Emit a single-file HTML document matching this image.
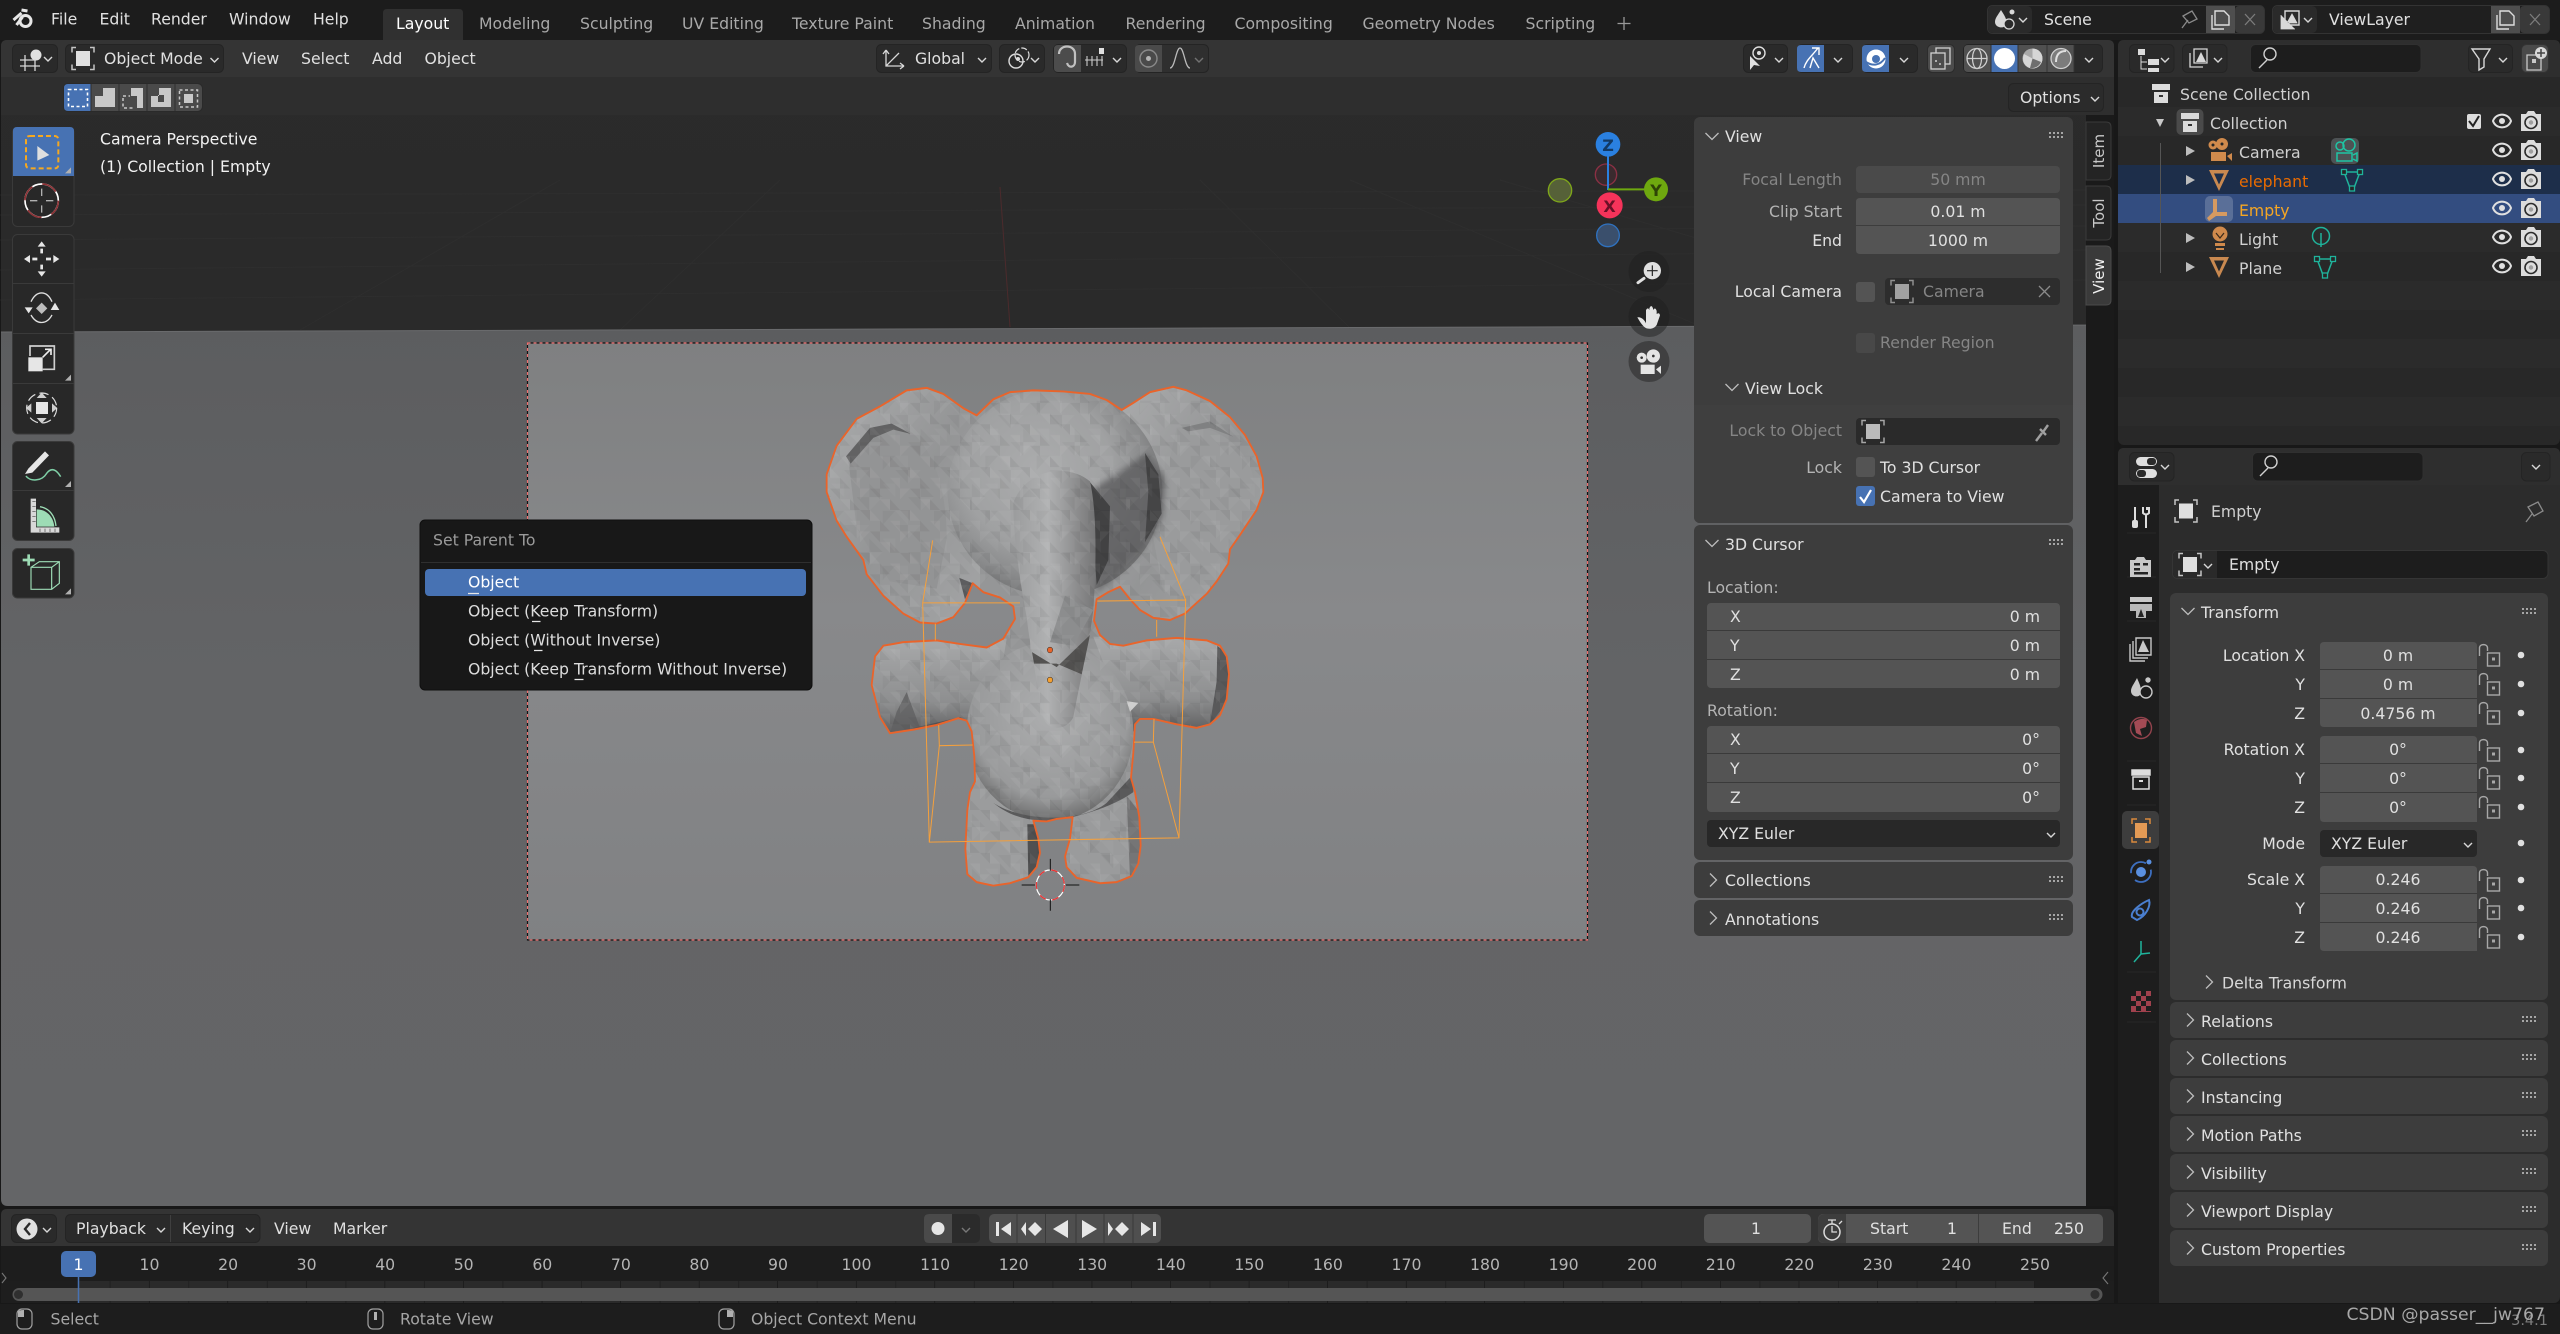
<!DOCTYPE html>
<html><head><meta charset="utf-8"><title>Blender</title>
<style>
html,body{margin:0;padding:0;background:#181818;width:2560px;height:1334px;overflow:hidden}
svg{display:block;position:absolute;left:0;top:0}
text{font-family:"DejaVu Sans","Liberation Sans",sans-serif;font-size:15.7px;fill:#e0e0e0}
.m{text-anchor:middle}.e{text-anchor:end}
.tab{fill:#a8a8a8}.dim{fill:#858585}.lab{fill:#b4b4b4}.tn{fill:#b4b4b4}.st{fill:#a6a6a6}
.w{fill:#2a2a2a;stroke:#242424}.f{fill:#545454}.l{fill:none;stroke:#dcdcdc;stroke-width:1.5}
.ls{fill:none;stroke:#b8b8b8;stroke-width:1.3}.p{fill:#3d3d3d}.i{fill:#dcdcdc}
</style></head><body>
<svg width="2560" height="1334" viewBox="0 0 2560 1334" xmlns="http://www.w3.org/2000/svg">
<defs>
<g id="dn"><path d="M-4-2L0 2L4-2" fill="none" stroke="#d8d8d8" stroke-width="1.4"/></g>
<g id="pd"><path d="M-6.500-3L0 3.500L6.500-3" fill="none" stroke="#bdbdbd" stroke-width="1.3"/></g>
<g id="pr"><path d="M-3-6.500L3.500 0L-3 6.500" fill="none" stroke="#bdbdbd" stroke-width="1.3"/></g>
<g id="gr"><path d="M0 0H15M0 4H15" stroke="#a6a6a6" stroke-width="2" stroke-dasharray="2 2" fill="none"/></g>
<g id="ob"><path d="M-7-11H-11V-6M7-11H11V-6M-7 11H-11V6M7 11H11V6" fill="none" stroke="#c4c4c4" stroke-width="1.5"/><rect x="-7" y="-7.500" width="14" height="15" fill="#e0e0e0"/></g>
<g id="ey"><path d="M-9 0C-6-8.500 6-8.500 9 0C6 8.500-6 8.500-9 0Z" fill="none" stroke="#e0e0e0" stroke-width="2"/><circle r="3" fill="#e0e0e0"/></g>
<g id="rc"><path d="M-10-7H-5L-3-10H3L5-7H10V10H-10Z" fill="#dcdcdc"/><circle cy="1.500" r="6" fill="none" stroke="#2b2b2b" stroke-width="1.600"/><circle cy="1.500" r="2.200" fill="#2b2b2b" opacity=".35"/></g>
<g id="me"><path fill-rule="evenodd" d="M-10-10H10L0 11ZM-5-6.500L0 4.500L5-6.500Z" fill="#c98950"/></g>
<g id="md"><path d="M-8-8H8L2 8H-2Z" fill="none" stroke="#1fb39b" stroke-width="1.500"/><rect x="-10.500" y="-10.500" width="5" height="5" fill="#262626" stroke="#1fb39b" stroke-width="1.300"/><rect x="5.500" y="-10.500" width="5" height="5" fill="#262626" stroke="#1fb39b" stroke-width="1.300"/><rect x="-2.500" y="6" width="5" height="5" fill="#262626" stroke="#1fb39b" stroke-width="1.300"/></g>
<g id="lk"><path d="M-11 1V-7C-11-11.500-3-11.500-3-7V-4" fill="none" stroke="#a8a8a8" stroke-width="1.400"/><rect x="-3" y="-2" width="12" height="13" fill="none" stroke="#a8a8a8" stroke-width="1.400"/><rect x="1.500" y="2.500" width="3" height="3" fill="#a8a8a8"/></g>
<g id="mg"><path d="M-8-4C-8-14 8-14 8-4V4C8 9 2 11 0 5" fill="none" stroke="#c0c0c0" stroke-width="2.200"/></g>
<path id="corner" d="M0 6L6 0V6Z" fill="#b0b0b0"/>
<linearGradient id="vtop" x1="0" y1="0" x2="0" y2="1"><stop offset="0" stop-color="#2b2b2b"/><stop offset="1" stop-color="#262626"/></linearGradient>
<linearGradient id="ground" x1="0" y1="0" x2="0" y2="1"><stop offset="0" stop-color="#5c5d5f"/><stop offset=".4" stop-color="#636466"/><stop offset="1" stop-color="#646567"/></linearGradient>
<linearGradient id="frame" x1="0" y1="0" x2="0" y2="1"><stop offset="0" stop-color="#7f8081"/><stop offset=".45" stop-color="#88898b"/><stop offset="1" stop-color="#808183"/></linearGradient>
<radialGradient id="hd" cx=".42" cy=".4" r=".7"><stop offset="0" stop-color="#abacad"/><stop offset=".5" stop-color="#a0a1a2"/><stop offset=".72" stop-color="#8a8b8c"/><stop offset="1" stop-color="#626263"/></radialGradient>
<linearGradient id="ear1" x1="0" y1="0" x2="1" y2="1"><stop offset="0" stop-color="#abacad"/><stop offset=".5" stop-color="#949596"/><stop offset="1" stop-color="#a4a5a6"/></linearGradient>
<linearGradient id="trk" x1="0" y1="0" x2="1" y2="0"><stop offset="0" stop-color="#9b9c9d"/><stop offset=".42" stop-color="#b0b1b2"/><stop offset="1" stop-color="#767677"/></linearGradient>
<linearGradient id="arm" x1="0" y1="0" x2="0" y2="1"><stop offset="0" stop-color="#a8a9aa"/><stop offset=".65" stop-color="#8e8f90"/><stop offset="1" stop-color="#5e5e5f"/></linearGradient>
<radialGradient id="bod" cx=".5" cy=".4" r=".65"><stop offset="0" stop-color="#adaeaf"/><stop offset=".72" stop-color="#999a9b"/><stop offset="1" stop-color="#5f5f5f"/></radialGradient>
<filter id="bl" x="-20%" y="-20%" width="140%" height="140%"><feGaussianBlur stdDeviation="9"/></filter>
<pattern id="fc" width="120" height="120" patternUnits="userSpaceOnUse">
<path d="M0 0H30L0 30ZM60 30H90V60ZM30 60L60 90H30ZM90 90H120V120Z" fill="#fff" opacity=".05"/>
<path d="M30 0H60V30ZM90 30L120 60H90ZM0 60H30V90ZM60 90L90 120H60Z" fill="#000" opacity=".05"/>
</pattern>
<pattern id="fc2" width="154" height="154" patternUnits="userSpaceOnUse">
<path d="M0 38H38V76ZM76 0H114L76 38ZM38 114H76V154ZM114 76H154L114 114Z" fill="#fff" opacity=".03"/>
<path d="M38 0H76V38ZM114 38L154 76H114ZM0 114H38L0 154ZM76 76H114V114Z" fill="#000" opacity=".03"/>
</pattern>
<pattern id="tk" width="78.56" height="30" x="70.94" patternUnits="userSpaceOnUse"><rect x="78" width="1.200" height="30" fill="#111"/><rect x="38.7" width="1" height="30" fill="#202020"/></pattern>
<clipPath id="cl"><path id="olp" d="M590 155L640 110L690 90L760 85L850 88L930 95L980 112L1025 140L1060 120L1110 90L1180 75L1220 85L1290 115L1350 160L1395 210L1430 270L1448 330L1450 370L1430 420L1380 490L1350 530L1345 570L1310 620L1280 655L1250 680L1215 710L1170 728L1120 722L1080 700L1050 670L1020 635L985 650L950 670L942 730L960 770L990 795L1030 800L1100 785L1190 778L1280 785L1320 800L1340 830L1347 880L1340 950L1320 995L1290 1020L1250 1030L1190 1020L1120 1005L1080 1005L1065 1020L1060 1100L1053 1170L1065 1210L1078 1280L1082 1360L1075 1410L1055 1445L1010 1462L960 1465L890 1450L860 1420L855 1390L870 1340L878 1280L830 1285L800 1292L760 1290L775 1340L780 1380L770 1420L745 1448L690 1465L640 1472L590 1462L562 1440L556 1370L562 1260L570 1210L585 1180L583 1110L575 1040L560 1010L535 1003L470 1022L400 1035L330 1045L300 1000L275 910L285 830L310 800L370 790L470 785L540 795L620 805L670 780L705 725L700 690L660 665L610 650L578 625L555 680L520 720L470 738L420 735L370 710L310 660L260 600L250 560L200 495L170 450L140 370L140 320L170 240L230 165L300 130L380 85L440 78L490 95L550 135Z"/></clipPath>
</defs>

<!-- base -->
<rect width="2560" height="1334" fill="#181818"/>
<rect width="2560" height="40" fill="#1c1c1c"/>
<rect y="1304" width="2560" height="30" fill="#1d1d1d"/>

<!-- Top bar -->
<g transform="translate(24.500 19)"><circle cx="1" cy="2" r="5.500" fill="none" stroke="#e6e6e6" stroke-width="3"/><path d="M-11 1L-3-6M-8 6L-2-2M-3-9L3-8" stroke="#e6e6e6" stroke-width="3" fill="none"/></g>
<text x="51" y="24.500">File</text><text x="99.500" y="24.500">Edit</text><text x="151" y="24.500">Render</text><text x="229" y="24.500">Window</text><text x="313" y="24.500">Help</text>
<path d="M383 40V13Q383 9 387 9H459Q463 9 463 13V40Z" fill="#303030"/>
<text x="396" y="29" style="fill:#fff">Layout</text>
<g class="tab"><text class="tab" x="479" y="29">Modeling</text><text class="tab" x="580" y="29">Sculpting</text><text class="tab" x="682" y="29">UV Editing</text><text class="tab" x="792" y="29">Texture Paint</text><text class="tab" x="922" y="29">Shading</text><text class="tab" x="1015" y="29">Animation</text><text class="tab" x="1125.500" y="29">Rendering</text><text class="tab" x="1234.500" y="29">Compositing</text><text class="tab" x="1362.500" y="29">Geometry Nodes</text><text class="tab" x="1525.500" y="29">Scripting</text></g>
<path d="M1624 17V30M1617.500 23.500H1630.500" stroke="#999" stroke-width="1.300"/>

<!-- scene selector -->
<rect x="1987.500" y="5.500" width="277" height="28" rx="5" fill="#1f1f1f" stroke="#333"/>
<rect x="1988" y="6" width="44" height="27" rx="5" fill="#2a2a2a"/>
<path d="M2001 10C2006 18 2008 21 2005 26C2002 29 1995 27 1995 22C1995 18 1998 15 2001 10Z" fill="#d8d8d8"/><circle cx="2009" cy="24" r="5" fill="#2a2a2a" stroke="#d8d8d8" stroke-width="1.300"/><circle cx="2012" cy="12" r="2.500" fill="#d8d8d8"/>
<use href="#dn" x="2023" y="20"/>
<text x="2044" y="25">Scene</text>
<path d="M2182 28L2188 20M2183 16L2192 11L2197 19L2189 23Z" fill="none" stroke="#8a8a8a" stroke-width="1.300"/>
<rect x="2206" y="6" width="29" height="27" fill="#4e4e4e"/>
<path d="M2215 11H2224L2229 16V25H2215ZM2212 15V29H2224" fill="none" stroke="#ddd" stroke-width="1.400"/>
<rect x="2235" y="6" width="29" height="27" rx="4" fill="#393939"/><path d="M2245 14L2255 25M2255 14L2245 25" stroke="#7c7c7c" stroke-width="1.300"/>
<rect x="2272.500" y="5.500" width="277" height="28" rx="5" fill="#1f1f1f" stroke="#333"/>
<rect x="2273" y="6" width="44" height="27" rx="5" fill="#2a2a2a"/>
<path d="M2285 11H2299V25H2285Z" fill="none" stroke="#d8d8d8" stroke-width="1.400"/><path d="M2281 15V29H2295M2287 23L2292 14L2297 23Z" fill="#d8d8d8" stroke="#d8d8d8" stroke-width=".8"/>
<use href="#dn" x="2308" y="20"/>
<text x="2329" y="25">ViewLayer</text>
<rect x="2491" y="6" width="29" height="27" fill="#4e4e4e"/>
<path d="M2500 11H2509L2514 16V25H2500ZM2497 15V29H2509" fill="none" stroke="#ddd" stroke-width="1.400"/>
<rect x="2520" y="6" width="29" height="27" rx="4" fill="#393939"/><path d="M2530 14L2540 25M2540 14L2530 25" stroke="#7c7c7c" stroke-width="1.300"/>

<!-- 3D viewport -->
<rect x="1" y="40" width="2113" height="1166" rx="6" fill="url(#vtop)"/>
<path d="M1 332L2114 325V1206H8Q1 1206 1 1199Z" fill="url(#ground)"/>
<g stroke="#323232" stroke-width="1" fill="none" opacity=".45">
<path d="M0 300L2086 280M0 270L2086 250M0 240L2086 226M0 215L2086 205M0 195L2086 190M300 330L560 180M620 330L780 180M1350 328L1200 180M1700 326L1350 180M1990 325L1500 180"/>
</g>
<path d="M1000 187L1010 327" stroke="#4c2a2c" stroke-width="1"/>
<path d="M1 332L2114 325" stroke="#6a6b6d" stroke-width="1"/>
<rect x="527.500" y="343" width="1060" height="597" fill="url(#frame)" stroke="#111" stroke-width="1.200"/>
<rect x="527.500" y="343" width="1060" height="597" fill="none" stroke="#ef6f6f" stroke-width="1.200" stroke-dasharray="3 3"/>

<!-- Elephant: zoom coordinates x/3, y/2.8 -->
<g transform="translate(780 360) scale(.33333 .35714)">
<g clip-path="url(#cl)">
<rect width="1560" height="1560" fill="#959697"/>
<path d="M140 70H600V760H140Z" fill="url(#ear1)"/>
<path d="M1000 70H1460V740H1000Z" fill="url(#ear1)"/>
<path d="M205 280C240 200 300 170 390 200C440 230 500 330 500 500L470 640L330 620L230 470Z" fill="#939495"/>
<path d="M1190 190C1300 170 1400 240 1420 330C1400 430 1330 560 1240 640L1150 650L1120 500Z" fill="#9a9b9c"/>
<path d="M198 270L270 190L335 178L392 207L340 195L280 218L212 290Z" fill="#626263"/>
<path d="M1205 190L1290 172L1360 215L1290 190L1225 200Z" fill="#808182"/>
<path d="M260 780H680L640 1010L330 1050L270 1000Z" fill="url(#arm)"/>
<path d="M940 775H1350V1040H1050Z" fill="url(#arm)"/>
<path d="M1312 800L1350 830L1340 960L1290 1020L1310 900Z" fill="#59595a"/>
<path d="M380 930L420 1030L330 1045L350 985Z" fill="#606061" opacity=".8"/>
<path d="M380 1035L540 1000L580 1020L470 1025Z" fill="#555556"/>
<path d="M550 1200H790V1480H550Z" fill="#9b9c9d"/>
<path d="M742 1300L790 1300L780 1420L745 1450Z" fill="#505051"/>
<path d="M860 1240H1090V1480H860Z" fill="#9a9b9c"/>
<path d="M1040 1220L1090 1280L1080 1420L1050 1450Z" fill="#757576"/>
<ellipse cx="810" cy="1040" rx="250" ry="250" fill="url(#bod)"/>
<path d="M640 1240C720 1290 900 1300 980 1240L1060 1160L1060 1210C1000 1250 880 1290 780 1290C720 1285 680 1270 640 1240Z" fill="#5a5a5b"/>
<path d="M538 610L578 625L555 670Z" fill="#58585a"/>
<ellipse cx="825" cy="370" rx="322" ry="292" fill="url(#hd)"/>
<g filter="url(#bl)">
<path d="M940 360L1040 300L1100 260L1155 330L1150 440L1090 530L1000 610L950 650Z" fill="#5f5f60" opacity=".85"/>
</g>
<path d="M1095 260L1135 320L1145 430L1095 510L1105 370Z" fill="#454546"/>
<path d="M928 340L990 410L985 560L950 630Z" fill="#424243"/>
<path d="M700 400C740 300 870 290 930 340C950 420 950 560 940 700C930 780 900 900 880 1000C860 1040 800 1040 790 1000C770 900 750 800 740 720C720 620 700 500 700 400Z" fill="url(#trk)"/>
<path d="M756 818L830 860L930 770L905 880L830 850L762 850Z" fill="#545352"/>
<path d="M855 660L940 700L880 800L810 790Z" fill="#8c8d8e"/>
<path d="M1040 955L1075 960L1050 985Z" fill="#cfcfcf"/>
<rect width="1560" height="1560" fill="url(#fc)"/>
<rect width="1560" height="1560" fill="url(#fc2)"/>
</g>
<use href="#olp" fill="none" stroke="#e9642b" stroke-width="5.500" stroke-linejoin="round"/>
<g fill="none" stroke="#f5a03c" stroke-width="3">
<path d="M428 680L448 1350L1197 1338L1217 672L952 675M428 680L720 680"/>
<path d="M428 680L458 505M1217 672L1140 495M448 1350L478 1080M1197 1338L1120 1070M478 1080L578 1078M1062 1070L1120 1070M466 738L466 785M1130 728L1130 775M476 1022L478 1080M1122 1005L1120 1070"/>
</g>
<circle cx="810" cy="812" r="8" fill="#e9642b" stroke="#3a2a1a" stroke-width="1.500"/>
<circle cx="810" cy="896" r="8" fill="#f5a030" stroke="#3a2a1a" stroke-width="1.500"/>
<circle cx="811" cy="1470" r="42" fill="none" stroke="#fff" stroke-width="3.500"/>
<circle cx="811" cy="1470" r="42" fill="none" stroke="#e33" stroke-width="3.500" stroke-dasharray="20 20"/>
<path d="M725 1470H765M858 1470H898M811 1397V1430M811 1510V1542" stroke="#111" stroke-width="3"/>
</g>

<!-- Header viewport -->
<path d="M1 77V46Q1 40 7 40H2108Q2114 40 2114 46V77Z" fill="#343434"/>
<rect x="1" y="77" width="2113" height="38" fill="#2e2e2e"/>
<rect class="w" x="12.500" y="44.500" width="45" height="28" rx="5"/>
<circle cx="36" cy="55" r="5.500" fill="#e0e0e0"/><path d="M20 60H36M20 66H40M25 55V71M35 60V71" stroke="#d8d8d8" stroke-width="1.300" fill="none"/>
<use href="#dn" x="48" y="59"/>
<rect class="w" x="65.500" y="44.500" width="158" height="28" rx="5"/>
<use href="#ob" x="83" y="58.500"/>
<text x="104" y="64">Object Mode</text><use href="#dn" x="214.500" y="60"/>
<text x="242" y="64">View</text><text x="301" y="64">Select</text><text x="372" y="64">Add</text><text x="424.500" y="64">Object</text>
<!-- select modes -->
<rect x="63.500" y="83.500" width="139" height="28" rx="5" fill="#4a4a4a" stroke="#2a2a2a"/>
<path d="M68 84H91V111H68Q64 111 64 107V88Q64 84 68 84Z" fill="#4772b3"/>
<path d="M91 84V111M119 84V111M147 84V111M175 84V111" stroke="#2f2f2f"/>
<rect x="68.500" y="89.500" width="19" height="17" fill="none" stroke="#fff" stroke-width="1.600" stroke-dasharray="3 2.500"/>
<path d="M103 88H115V107H95V96H103Z" fill="#c8c8c8"/>
<path d="M131 88H143V108H137V96H131Z" fill="#c8c8c8"/><path d="M123 96H130M123 98V108H134" stroke="#c8c8c8" stroke-width="1.500" stroke-dasharray="3 2.500" fill="none"/>
<path fill-rule="evenodd" d="M159 88H171V107H151V96H159ZM158 95V102H164V95Z" fill="#c8c8c8"/>
<rect x="179.500" y="90" width="18" height="17" fill="none" stroke="#c8c8c8" stroke-width="1.500" stroke-dasharray="3 2.500"/><rect x="184" y="94" width="9" height="9" fill="#c8c8c8"/>

<!-- Center header widgets -->
<rect class="w" x="876.500" y="44.500" width="115" height="28" rx="5"/>
<path d="M886 50V66H904M886 50L883 54M886 50L889 54M904 66L900 63M904 66L900 69M886 66L899 53" fill="none" stroke="#d8d8d8" stroke-width="1.300"/>
<text x="915" y="64">Global</text><use href="#dn" x="982" y="60"/>
<rect class="w" x="999.500" y="44.500" width="45" height="28" rx="5"/>
<circle cx="1016" cy="61" r="7" fill="none" stroke="#ddd" stroke-width="1.400"/><circle cx="1022" cy="55" r="7" fill="none" stroke="#ddd" stroke-width="1.200" stroke-dasharray="6 2"/><circle cx="1018" cy="59" r="2" fill="#ddd"/><use href="#dn" x="1035" y="60"/>
<rect class="w" x="1053.500" y="44.500" width="73" height="28" rx="5"/>
<path d="M1058 45H1081V72H1058Q1054 72 1054 68V49Q1054 45 1058 45Z" fill="#4c4c4c"/>
<use href="#mg" x="1067" y="58"/>
<path d="M1085 60H1103M1087 56V66M1092 56V66M1097 56V66M1102 56V66" stroke="#ccc" stroke-width="1.100"/><rect x="1099" y="48" width="5" height="6" fill="#e0e0e0"/><use href="#dn" x="1117" y="60"/>
<rect class="w" x="1135.500" y="44.500" width="73" height="28" rx="5" style="fill:#2f2f2f"/>
<path d="M1139 45H1162V72H1139Q1135 72 1135 68V49Q1135 45 1139 45Z" fill="#4a4a4a"/>
<circle cx="1148.500" cy="58.500" r="8.500" fill="none" stroke="#8a8a8a" stroke-width="1.400"/><circle cx="1148.500" cy="58.500" r="2.500" fill="#b4b4b4"/>
<path d="M1170 68C1175 68 1176 48 1180 48C1184 48 1185 68 1190 68" fill="none" stroke="#bbb" stroke-width="1.300"/><use href="#dn" x="1199" y="60" opacity=".4"/>

<!-- Right header widgets -->
<rect class="w" x="1743.500" y="44.500" width="44" height="28" rx="5"/>
<path d="M1750 56L1750 70L1754 65L1760 66Z" fill="#e0e0e0"/><circle cx="1759" cy="53" r="6" fill="none" stroke="#e0e0e0" stroke-width="1.400"/><circle cx="1759" cy="53" r="2" fill="#e0e0e0"/><use href="#dn" x="1779" y="60"/>
<rect class="w" x="1797.500" y="44.500" width="55" height="28" rx="5"/>
<path d="M1801 45H1824V72H1801Q1797 72 1797 68V49Q1797 45 1801 45Z" fill="#4772b3"/>
<path d="M1804 68C1806 60 1812 56 1818 48M1810 68L1813 58L1819 68M1812 48H1819V55" fill="none" stroke="#fff" stroke-width="1.400"/><use href="#dn" x="1838" y="60"/>
<rect class="w" x="1862.500" y="44.500" width="55" height="28" rx="5"/>
<path d="M1866 45H1889V72H1866Q1862 72 1862 68V49Q1862 45 1866 45Z" fill="#4772b3"/>
<circle cx="1876" cy="59" r="9.500" fill="#fff"/><circle cx="1876" cy="59" r="4" fill="#4772b3"/><path d="M1866 62C1872 66 1880 66 1885 58" stroke="#4772b3" stroke-width="2" fill="none"/><use href="#dn" x="1904" y="60"/>
<rect x="1927.500" y="44.500" width="27" height="28" rx="5" fill="#4c4c4c" stroke="#2c2c2c"/>
<rect x="1936" y="48" width="14" height="16" fill="none" stroke="#d0d0d0" stroke-width="1.300"/><rect x="1931" y="53" width="14" height="16" fill="#4c4c4c" stroke="#d0d0d0" stroke-width="1.300"/><path d="M1935 61H1937M1940 63V65" stroke="#d0d0d0" stroke-width="1.400"/>
<rect x="1963.500" y="44.500" width="139" height="28" rx="5" fill="#2a2a2a" stroke="#242424"/>
<path d="M1968 45H2074V72H1968Q1964 72 1964 68V49Q1964 45 1968 45Z" fill="#505050"/>
<rect x="1991" y="45" width="27" height="27" fill="#4772b3"/>
<path d="M1991 45V72M2018 45V72M2047 45V72M2074 45V72" stroke="#333"/>
<circle cx="1977" cy="58.500" r="10" fill="none" stroke="#cfcfcf" stroke-width="1.300"/><ellipse cx="1977" cy="58.500" rx="4.500" ry="10" fill="none" stroke="#cfcfcf" stroke-width="1.200"/><path d="M1967 58.500H1987" stroke="#cfcfcf" stroke-width="1.200"/>
<circle cx="2004.500" cy="58.500" r="10.500" fill="#fff"/>
<circle cx="2032.500" cy="58.500" r="10" fill="#a8a8a8"/><path d="M2032.500 48.500A10 10 0 0 1 2032.500 68.500A10 10 0 0 1 2024 54L2032.500 58.500Z" fill="#d6d6d6"/><path d="M2032.500 58.500L2041 62A10 10 0 0 1 2030 68Z" fill="#6e6e6e"/>
<circle cx="2061" cy="58.500" r="10" fill="#7c7c7c" stroke="#d0d0d0" stroke-width="1.300"/><path d="M2056 62C2056 54 2060 51 2066 51" stroke="#e0e0e0" stroke-width="2" fill="none"/>
<use href="#dn" x="2089" y="60"/>
<rect class="w" x="2008.500" y="83.500" width="95" height="28" rx="5" style="fill:#2b2b2b"/>
<text x="2020" y="103">Options</text><use href="#dn" x="2095" y="99"/>

<!-- Toolbar -->
<g fill="#282828" stroke="#3a3a3a"><rect x="12.500" y="127.500" width="61.500" height="99" rx="5"/><rect x="12.500" y="234.500" width="61.500" height="199.500" rx="5"/><rect x="12.500" y="441.500" width="61.500" height="99" rx="5"/><rect x="12.500" y="548.500" width="61.500" height="49.500" rx="5"/></g>
<path d="M17 127H70Q74 127 74 131V176H13V131Q13 127 17 127Z" fill="#4772b3"/>
<path d="M13 283.500H74M13 333.500H74M13 383.500H74M13 490.500H74" stroke="#3a3a3a"/>
<g transform="translate(0 120) scale(.33333)">
<path d="M90 48H163Q175 48 175 60V133Q175 145 163 145H90Q78 145 78 133V60Q78 48 90 48Z" fill="none" stroke="#f6a81f" stroke-width="6" stroke-dasharray="15 9"/>
<path d="M112 78L148 105L112 122Z" fill="#dfdfdf"/>
<use href="#corner" transform="translate(195 142) scale(3)"/>
<circle cx="125" cy="242" r="50" fill="none" stroke="#fff" stroke-width="5"/><circle cx="125" cy="242" r="50" fill="none" stroke="#8d2f33" stroke-width="5" stroke-dasharray="48 31"/>
<path d="M125 206V228M125 256V278M90 242H112M138 242H160" stroke="#b0b0b0" stroke-width="4"/>
<g fill="#e6e6e6"><path d="M125 364L137 380H113ZM125 470L137 454H113ZM72 417L90 405V429ZM178 417L160 405V429Z"/><path d="M121 386H129V400H121ZM121 434H129V448H121ZM97 413H112V421H97ZM138 413H153V421H138Z"/></g>
<path d="M93 545C110 510 140 510 156 545M156 585C140 615 110 615 93 585" fill="none" stroke="#e0e0e0" stroke-width="4"/>
<path d="M74 562H98L86 580ZM152 570H178L165 548Z" fill="#e6e6e6"/><path d="M125 548L142 565L125 582L108 565Z" fill="#bdbdbd"/>
<path d="M90 708V678H163V748H128" fill="none" stroke="#cfcfcf" stroke-width="5"/>
<rect x="85" y="712" width="43" height="42" fill="#e6e6e6"/><path d="M128 712L152 688M135 688H153V705" fill="none" stroke="#eee" stroke-width="5"/>
<use href="#corner" transform="translate(195 764) scale(3)"/>
<rect x="108" y="846" width="36" height="36" fill="#e6e6e6"/>
<path d="M125 818L140 834H110ZM125 910L140 894H110ZM78 864L94 850V878ZM172 864L156 850V878Z" fill="#cfcfcf"/>
<circle cx="125" cy="864" r="45" fill="none" stroke="#ddd" stroke-width="3.500" stroke-dasharray="28 13"/>
<path d="M78 1068C90 1085 125 1085 140 1060C155 1040 170 1050 182 1070" fill="none" stroke="#7fcfa6" stroke-width="4.500"/>
<path d="M85 1046L135 994L147 1006L97 1058L75 1062Z" fill="#e6e6e6"/>
<use href="#corner" transform="translate(195 1083) scale(3)"/>
<path d="M110 1168C140 1168 160 1190 163 1220H110Z" fill="#9ddcb5"/><path d="M120 1160C150 1165 165 1190 168 1218" fill="none" stroke="#9ddcb5" stroke-width="4"/>
<path d="M92 1136H108V1222H178V1238H92Z" fill="#d8d8d8"/>
<path d="M97 1145H107M97 1160H107M97 1175H107M97 1190H107M97 1205H107M120 1226V1236M135 1226V1236M150 1226V1236M165 1226V1236" stroke="#444" stroke-width="2"/>
<path d="M68 1320H104M86 1303V1337" stroke="#9ddcb5" stroke-width="8"/>
<path d="M93 1342L118 1325H178V1390L155 1408H93ZM93 1342H155V1408M155 1342L178 1325" fill="none" stroke="#9ddcb5" stroke-width="3.500"/>
<use href="#corner" transform="translate(195 1405) scale(3)"/>
</g>

<!-- Overlay text -->
<text x="100" y="144.500" style="fill:#f2f2f2">Camera Perspective</text>
<text x="100" y="172" style="fill:#f2f2f2">(1) Collection | Empty</text>

<!-- Gizmo -->
<g transform="translate(1520 110) scale(.33333)">
<circle cx="258" cy="194" r="32" fill="#3a2a2e" stroke="#8c3044" stroke-width="4"/>
<circle cx="120" cy="241" r="35" fill="#566138" stroke="#7fa71a" stroke-width="4"/>
<circle cx="264" cy="376" r="34" fill="#3a4f6c" stroke="#2f72c0" stroke-width="4"/>
<path d="M264 103V240" stroke="#2a80e0" stroke-width="6"/><path d="M264 238H408" stroke="#6ea80f" stroke-width="6"/>
<circle cx="264" cy="103" r="37" fill="#2a80e0"/><circle cx="408" cy="238" r="36" fill="#6ea80f"/><circle cx="269" cy="286" r="39" fill="#f5335a"/>
</g>
<text class="m" x="1608" y="151" style="font-size:16px;font-weight:bold;fill:#123a66">Z</text>
<text class="m" x="1656" y="196" style="font-size:16px;font-weight:bold;fill:#2e4406">Y</text>
<text class="m" x="1609.500" y="212" style="font-size:16px;font-weight:bold;fill:#6a1027">X</text>
<circle cx="1649" cy="271.500" r="20.500" fill="#1d1d1d" opacity=".5"/><circle cx="1649" cy="316.500" r="20.500" fill="#1d1d1d" opacity=".45"/><circle cx="1649" cy="361.500" r="20.500" fill="#1d1d1d" opacity=".45"/>
<g transform="translate(1520 110) scale(.33333)">
<circle cx="397" cy="482" r="26" fill="#e0e0e0"/><path d="M372 505L354 518" stroke="#e0e0e0" stroke-width="9" stroke-linecap="round"/><path d="M397 466V498M381 482H413" stroke="#222" stroke-width="3.500"/>
<path d="M352 622C365 620 375 632 378 640L378 600Q384 590 388 600V595Q394 582 399 595V600Q406 590 410 603V612Q418 606 420 616L410 645Q400 660 380 655C368 650 360 635 352 622Z" fill="#e4e4e4"/>
<circle cx="365" cy="743" r="15" fill="#e4e4e4"/><circle cx="400" cy="738" r="20" fill="#e4e4e4"/><circle cx="365" cy="743" r="4" fill="#333"/><circle cx="400" cy="738" r="4" fill="#333"/><rect x="362" y="764" width="42" height="28" fill="#e4e4e4"/><path d="M408 778L423 767V792Z" fill="#e4e4e4"/>
</g>

<!-- Region tabs -->
<rect x="2086" y="115" width="28" height="1091" fill="#1a1a1a"/>
<path d="M2086 122H2106Q2111 122 2111 127V175Q2111 180 2106 180H2086ZM2086 186H2106Q2111 186 2111 191V235Q2111 240 2106 240H2086Z" fill="#242424" stroke="#3a3a3a"/>
<path d="M2086 246H2106Q2111 246 2111 251V300Q2111 305 2106 305H2086Z" fill="#3a3a3a" stroke="#4a4a4a"/>
<text class="m" x="2104" y="151" transform="rotate(-90 2104 151)" style="font-size:15px;fill:#c8c8c8">Item</text>
<text class="m" x="2104" y="213" transform="rotate(-90 2104 213)" style="font-size:15px;fill:#c8c8c8">Tool</text>
<text class="m" x="2104" y="276" transform="rotate(-90 2104 276)" style="font-size:15px;fill:#f0f0f0">View</text>

<!-- Sidebar View panel -->
<rect class="p" x="1694" y="117" width="379" height="406" rx="6"/>
<rect x="1694" y="405" width="379" height="118" rx="6" fill="#3f3f3f"/><rect x="1694" y="405" width="379" height="30" fill="#3f3f3f"/>
<use href="#pd" x="1712" y="136"/><text x="1725" y="142">View</text><use href="#gr" x="2049" y="133"/>
<text class="e dim" x="1842" y="185">Focal Length</text>
<rect x="1856" y="166" width="204" height="27" rx="4" fill="#4a4a4a"/><text class="m dim" x="1958" y="185">50 mm</text>
<text class="e lab" x="1842" y="217">Clip Start</text><text class="e" x="1842" y="246">End</text>
<path d="M1860 198H2056Q2060 198 2060 202V225H1856V202Q1856 198 1860 198Z" class="f"/>
<path d="M1856 226H2060V250Q2060 254 2056 254H1860Q1856 254 1856 250Z" class="f"/>
<text class="m" x="1958" y="217">0.01 m</text><text class="m" x="1958" y="246">1000 m</text>
<text class="e" x="1842" y="297">Local Camera</text>
<rect x="1856" y="282" width="19" height="20" rx="3" fill="#545454"/>
<rect x="1885" y="278" width="175" height="27" rx="4" fill="#2d2d2d"/>
<g opacity=".65"><use href="#ob" x="1902" y="291.500"/></g><text class="dim" x="1923" y="297">Camera</text><path d="M2039 286L2050 297M2050 286L2039 297" stroke="#8a8a8a" stroke-width="1.300"/>
<rect x="1856" y="333" width="19" height="20" rx="3" fill="#484848"/><text class="dim" x="1880" y="348">Render Region</text>
<use href="#pd" x="1732" y="387"/><text x="1745" y="394">View Lock</text>
<text class="e dim" x="1842" y="436">Lock to Object</text>
<rect x="1856" y="418" width="204" height="27" rx="4" fill="#2a2a2a"/><g opacity=".8"><use href="#ob" x="1873" y="431.500"/></g>
<path d="M2036 441L2042 433M2040 429L2046 435M2043 432L2048 425" stroke="#a0a0a0" stroke-width="2.400"/>
<text class="e lab" x="1842" y="473">Lock</text>
<rect x="1856" y="457" width="19" height="20" rx="3" fill="#545454"/><text x="1880" y="473">To 3D Cursor</text>
<rect x="1856" y="486" width="19" height="20" rx="3" fill="#4772b3"/><path d="M1860 497L1864 502L1871 490" fill="none" stroke="#fff" stroke-width="2.200"/><text x="1880" y="502">Camera to View</text>

<!-- 3D Cursor panel -->
<rect class="p" x="1694" y="525" width="379" height="335" rx="6"/>
<use href="#pd" x="1712" y="543"/><text x="1725" y="550">3D Cursor</text><use href="#gr" x="2049" y="540"/>
<text class="lab" x="1707" y="593">Location:</text>
<rect class="f" x="1707" y="603" width="353" height="85" rx="4"/><path d="M1707 630.500H2060M1707 659.500H2060" stroke="#3a3a3a" stroke-width="1"/>
<text x="1730" y="622">X</text><text x="1730" y="651">Y</text><text x="1730" y="680">Z</text>
<text class="e" x="2040" y="622">0 m</text><text class="e" x="2040" y="651">0 m</text><text class="e" x="2040" y="680">0 m</text>
<text class="lab" x="1707" y="716">Rotation:</text>
<rect class="f" x="1707" y="726" width="353" height="86" rx="4"/><path d="M1707 753.500H2060M1707 782.500H2060" stroke="#3a3a3a" stroke-width="1"/>
<text x="1730" y="745">X</text><text x="1730" y="774">Y</text><text x="1730" y="803">Z</text>
<text class="e" x="2040" y="745">0°</text><text class="e" x="2040" y="774">0°</text><text class="e" x="2040" y="803">0°</text>
<rect x="1707" y="820" width="353" height="27" rx="4" fill="#282828"/><text x="1718" y="839">XYZ Euler</text><use href="#dn" x="2051" y="835"/>
<rect class="p" x="1694" y="862" width="379" height="36" rx="6"/><use href="#pr" x="1713" y="880"/><text x="1725" y="886">Collections</text><use href="#gr" x="2049" y="877"/>
<rect class="p" x="1694" y="900" width="379" height="36" rx="6"/><use href="#pr" x="1713" y="918"/><text x="1725" y="925">Annotations</text><use href="#gr" x="2049" y="915"/>

<!-- Popup -->
<rect x="420" y="520" width="392" height="170" rx="5" fill="#181818" stroke="#0f0f0f"/>
<text x="433" y="545.500" style="fill:#9a9a9a">Set Parent To</text>
<path d="M421 562.500H811" stroke="#2f2f2f"/>
<rect x="425" y="569" width="381" height="27" rx="4" fill="#4772b3"/>
<text x="468" y="587.500" style="fill:#fff">Object</text>
<text x="468" y="616.500" style="fill:#dcdcdc">Object (Keep Transform)</text>
<text x="468" y="645.500" style="fill:#dcdcdc">Object (Without Inverse)</text>
<text x="468" y="674.500" style="fill:#dcdcdc">Object (Keep Transform Without Inverse)</text>
<path d="M468 593.500H479M532 621.500H540.500M534 650.500H542.500M574.500 679.500H583.500" stroke="#e6e6e6" stroke-width="1.200"/>

<!-- Timeline -->
<rect x="1" y="1209" width="2113" height="94" rx="6" fill="#1d1d1d"/>
<path d="M1 1246V1215Q1 1209 7 1209H2108Q2114 1209 2114 1215V1246Z" fill="#343434"/>
<rect x="1" y="1281" width="2113" height="22" fill="#1e1e1e"/>
<rect x="78" y="1281" width="1957" height="22" fill="#2a2a2a"/>
<rect x="78" y="1281" width="1957" height="22" fill="url(#tk)"/>
<rect class="w" x="11.500" y="1214.500" width="45" height="28" rx="5"/>
<circle cx="27" cy="1229" r="10.500" fill="#e0e0e0"/><path d="M30 1223L25 1229L30 1235" fill="none" stroke="#2a2a2a" stroke-width="2.400"/><use href="#dn" x="47" y="1230"/>
<rect class="w" x="65.500" y="1214.500" width="194.500" height="28" rx="5"/><path d="M170.500 1215V1242" stroke="#3f3f3f"/>
<text x="76" y="1234">Playback</text><use href="#dn" x="161" y="1230"/><text x="182" y="1234">Keying</text><use href="#dn" x="250" y="1230"/>
<text x="274" y="1234">View</text><text x="333" y="1234">Marker</text>
<rect x="924" y="1214" width="56" height="29" rx="5" fill="#2b2b2b"/><path d="M929 1214H952V1243H929Q924 1243 924 1238V1219Q924 1214 929 1214Z" fill="#4a4a4a"/>
<circle cx="938" cy="1228.500" r="6.500" fill="#e6e6e6"/><use href="#dn" x="966" y="1230" opacity=".45"/>
<rect x="989" y="1214" width="172" height="29" rx="5" fill="#4f4f4f"/>
<path d="M1017 1214V1243M1045.500 1214V1243M1076 1214V1243M1104 1214V1243M1133 1214V1243" stroke="#3a3a3a"/>
<g fill="#e6e6e6"><path d="M996 1222H999V1236H996ZM1011 1222V1236L1001 1229Z"/><path d="M1026 1222V1236L1021 1229ZM1028 1229L1035 1222L1042 1229L1035 1236Z"/>
<path d="M1068 1220V1238L1053 1229Z"/><path d="M1082 1220L1097 1229L1082 1238Z"/><path d="M1108 1222L1113 1229L1108 1236ZM1115 1229L1122 1222L1129 1229L1122 1236Z"/><path d="M1141 1222L1151 1229L1141 1236ZM1153 1222H1156V1236H1153Z"/></g>
<rect x="1704" y="1214" width="107" height="29" rx="5" class="f"/><text class="m" x="1756" y="1234">1</text>
<rect x="1818" y="1214" width="285" height="29" rx="5" class="f"/><path d="M1825 1214H1846V1243H1825Q1818 1243 1818 1236V1221Q1818 1214 1825 1214Z" fill="#3d3d3d"/><path d="M1978.500 1214V1243" stroke="#3d3d3d"/>
<circle cx="1832" cy="1232" r="8" fill="none" stroke="#dcdcdc" stroke-width="1.500"/><path d="M1832 1226V1232H1837M1828 1220H1836M1832 1220V1224M1839 1224L1842 1221" fill="none" stroke="#dcdcdc" stroke-width="1.300"/>
<text x="1870" y="1234">Start</text><text class="e" x="1957" y="1234">1</text><text x="2002" y="1234">End</text><text class="e" x="2084" y="1234">250</text>
<g class="m">
<text class="m tn" x="149.500" y="1270">10</text><text class="m tn" x="228.100" y="1270">20</text><text class="m tn" x="306.600" y="1270">30</text><text class="m tn" x="385.200" y="1270">40</text><text class="m tn" x="463.700" y="1270">50</text><text class="m tn" x="542.300" y="1270">60</text><text class="m tn" x="620.900" y="1270">70</text><text class="m tn" x="699.400" y="1270">80</text><text class="m tn" x="778" y="1270">90</text><text class="m tn" x="856.500" y="1270">100</text><text class="m tn" x="935.100" y="1270">110</text><text class="m tn" x="1013.700" y="1270">120</text><text class="m tn" x="1092.200" y="1270">130</text><text class="m tn" x="1170.800" y="1270">140</text><text class="m tn" x="1249.300" y="1270">150</text><text class="m tn" x="1327.900" y="1270">160</text><text class="m tn" x="1406.500" y="1270">170</text><text class="m tn" x="1485" y="1270">180</text><text class="m tn" x="1563.600" y="1270">190</text><text class="m tn" x="1642.100" y="1270">200</text><text class="m tn" x="1720.700" y="1270">210</text><text class="m tn" x="1799.300" y="1270">220</text><text class="m tn" x="1877.800" y="1270">230</text><text class="m tn" x="1956.400" y="1270">240</text><text class="m tn" x="2035" y="1270">250</text>
</g>
<rect x="12.500" y="1288" width="2090" height="13" rx="6.500" fill="#555"/>
<circle cx="18.500" cy="1294.500" r="4.500" fill="#2f2f2f"/><circle cx="2095" cy="1294.500" r="4.500" fill="#2f2f2f"/>
<path d="M78.500 1277V1303" stroke="#4772b3" stroke-width="1.500"/>
<rect x="61" y="1251" width="35" height="26" rx="5" fill="#4772b3"/><text class="m" x="78.500" y="1270" style="fill:#fff">1</text>
<path d="M2 1273L6 1278L2 1283" fill="none" stroke="#777" stroke-width="1.100"/>
<path d="M2108 1272L2103 1278L2108 1284" fill="none" stroke="#777" stroke-width="1.100"/>

<!-- Outliner -->
<rect x="2118" y="40" width="442" height="405" rx="6" fill="#282828"/>
<path d="M2118 77V46Q2118 40 2124 40H2554Q2560 40 2560 46V77Z" fill="#2e2e2e"/>
<g fill="#2b2b2b"><rect x="2118" y="107" width="442" height="29"/><rect x="2118" y="165" width="442" height="29"/><rect x="2118" y="223" width="442" height="29"/><rect x="2118" y="281" width="442" height="29"/><rect x="2118" y="339" width="442" height="29"/><rect x="2118" y="397" width="442" height="29"/></g>
<rect x="2118" y="165" width="442" height="29" fill="#1d2e4a"/>
<rect x="2118" y="194" width="442" height="29" fill="#334d80"/>
<rect class="w" x="2129.500" y="44.500" width="44.500" height="28" rx="5"/>
<path d="M2138 49H2145V55H2138ZM2148 59H2159V65H2148ZM2148 68H2159V72H2148Z" fill="#dcdcdc"/><path d="M2141 56V69H2147M2141 62H2147" stroke="#dcdcdc" fill="none"/><use href="#dn" x="2165" y="60"/>
<rect class="w" x="2182.500" y="44.500" width="44.500" height="28" rx="5"/>
<path d="M2194 49H2207V63H2194ZM2190 53V67H2203" fill="none" stroke="#d8d8d8" stroke-width="1.300"/><path d="M2196 62L2201 52L2206 62Z" fill="#d8d8d8"/><use href="#dn" x="2218" y="60"/>
<rect x="2250.500" y="44.500" width="170.500" height="28" rx="5" fill="#1d1d1d" stroke="#303030"/>
<circle cx="2270" cy="54" r="6" fill="none" stroke="#d0d0d0" stroke-width="1.400"/><path d="M2267 60L2259 68" stroke="#d0d0d0" stroke-width="1.400"/>
<rect class="w" x="2468.500" y="44.500" width="44" height="28" rx="5"/><path d="M2472 49H2490L2484 59V67L2479 70V59Z" fill="none" stroke="#d8d8d8" stroke-width="1.400"/><use href="#dn" x="2503" y="60"/>
<rect x="2521.500" y="44.500" width="27" height="28" rx="5" fill="#4a4a4a" stroke="#333"/><path d="M2527 55H2541V70H2527Z" fill="none" stroke="#c8c8c8" stroke-width="1.300"/><circle cx="2541" cy="53" r="6" fill="#d8d8d8"/><path d="M2541 49V57M2537 53H2545" stroke="#444" stroke-width="1.500"/><rect x="2532" y="59" width="4" height="4" fill="#c8c8c8"/>

<path d="M2152 84H2170V90H2152ZM2154 92H2168V103H2154Z" fill="#dcdcdc"/><rect x="2159" y="95" width="4" height="2" fill="#333"/>
<text class="lab" x="2180" y="100" style="fill:#d0d0d0">Scene Collection</text>
<path d="M2156 119H2164L2160 127Z" fill="#c8c8c8"/>
<rect x="2176.500" y="109" width="27" height="26" rx="5" fill="#4a4a4a"/>
<path d="M2181 113H2199V119H2181ZM2183 121H2197V132H2183Z" fill="#dcdcdc"/><rect x="2188" y="124" width="4" height="2" fill="#333"/>
<text x="2210" y="129" style="fill:#d0d0d0">Collection</text>
<rect x="2467" y="114" width="14" height="15" rx="2" fill="#ddd"/><path d="M2469 121L2473 126L2479 116" fill="none" stroke="#222" stroke-width="2"/>
<path d="M2160.500 143V273" stroke="#555"/>
<!-- rows -->
<path d="M2186 146L2195 151L2186 156ZM2186 175L2195 180L2186 185ZM2186 233L2195 238L2186 243ZM2186 262L2195 267L2186 272Z" fill="#bdbdbd"/>
<g fill="#d08a4c"><circle cx="2213" cy="145" r="4.500"/><circle cx="2222" cy="144" r="6"/><rect x="2211" y="152" width="15" height="9"/><path d="M2227 156L2232 153V161Z"/></g><circle cx="2213" cy="145" r="1.500" fill="#262626"/><circle cx="2222" cy="144" r="1.500" fill="#262626"/>
<text x="2239" y="158" style="fill:#d0d0d0">Camera</text>
<rect x="2331" y="138" width="28" height="26" rx="5" fill="#4d5254"/>
<g fill="none" stroke="#1fc4a4" stroke-width="1.500"><circle cx="2340" cy="146" r="4"/><circle cx="2349" cy="145" r="6"/><rect x="2337" y="153" width="15" height="8"/><path d="M2353 155L2357 153V161L2353 159"/></g>
<use href="#me" x="2219" y="180"/>
<text x="2239" y="187" style="fill:#e96b00">elephant</text>
<use href="#md" x="2352" y="180"/>
<rect x="2205" y="196" width="28" height="26" rx="5" fill="#5a6f98"/>
<path d="M2217 199V212L2227 212V216H2216L2209 221L2207 218L2213 212V199Z" fill="#d69a60"/>
<text x="2239" y="216" style="fill:#f5a623">Empty</text>
<circle cx="2220" cy="234" r="7.500" fill="#d08a4c"/><rect x="2215" y="243" width="10" height="3" fill="#d08a4c"/><rect x="2216" y="248" width="8" height="2" fill="#d08a4c"/><path d="M2216 233L2220 238L2224 233" fill="none" stroke="#3a2a1a" stroke-width="1.200"/>
<text x="2239" y="245" style="fill:#d0d0d0">Light</text>
<circle cx="2321" cy="236" r="8.500" fill="none" stroke="#1fb39b" stroke-width="1.500"/><path d="M2321 233V247" stroke="#1fb39b" stroke-width="1.500"/>
<use href="#me" x="2219" y="267"/>
<text x="2239" y="274" style="fill:#d0d0d0">Plane</text>
<use href="#md" x="2325" y="267"/>
<use href="#ey" x="2502" y="121"/><use href="#rc" x="2531" y="121"/>
<use href="#ey" x="2502" y="150"/><use href="#rc" x="2531" y="150"/>
<use href="#ey" x="2502" y="179"/><use href="#rc" x="2531" y="179"/>
<use href="#ey" x="2502" y="208"/><use href="#rc" x="2531" y="208"/>
<use href="#ey" x="2502" y="237"/><use href="#rc" x="2531" y="237"/>
<use href="#ey" x="2502" y="266"/><use href="#rc" x="2531" y="266"/>

<!-- Properties -->
<rect x="2118" y="448" width="442" height="855" rx="6" fill="#2c2c2c"/>
<path d="M2118 485V454Q2118 448 2124 448H2554Q2560 448 2560 454V485Z" fill="#2e2e2e"/>
<rect x="2118" y="485" width="41" height="818" fill="#1d1d1d"/>
<rect class="w" x="2129.500" y="452.500" width="44.500" height="28.500" rx="5"/>
<rect x="2136" y="457" width="21" height="9" rx="4.500" fill="#e0e0e0"/><rect x="2136" y="469" width="21" height="9" rx="4.500" fill="#e0e0e0"/><rect x="2147" y="458" width="9" height="7" fill="#2a2a2a" rx="3"/><rect x="2137" y="470" width="9" height="7" fill="#2a2a2a" rx="3"/><use href="#dn" x="2165" y="467"/>
<rect x="2252.500" y="452.500" width="170.500" height="28.500" rx="5" fill="#1d1d1d" stroke="#303030"/>
<circle cx="2271" cy="462" r="6" fill="none" stroke="#d0d0d0" stroke-width="1.400"/><path d="M2268 468L2260 476" stroke="#d0d0d0" stroke-width="1.400"/>
<rect class="w" x="2521.500" y="452.500" width="28.500" height="28.500" rx="5"/><use href="#dn" x="2536" y="467"/>
<!-- property tab icons -->
<rect x="2122" y="811" width="37" height="38" rx="5" fill="#3d3d3d"/>
<path d="M2127 533H2156M2127 577H2156M2127 621H2156M2127 761H2156M2127 805H2156M2127 972H2156M2127 1022H2156" stroke="#262626"/>
<path d="M2135 507V520M2147 507V510M2143 507V513Q2146 516 2149 513V507M2146 514V528" stroke="#ddd" stroke-width="2" fill="none"/><rect x="2132" y="520" width="6" height="8" rx="2" fill="#ddd"/>
<path d="M2130 560H2135L2137 557H2144L2146 560H2151V577H2130Z" fill="#c8c8c8"/><rect x="2134" y="563" width="6" height="2.500" fill="#222"/><rect x="2134" y="568" width="6" height="2.500" fill="#222"/><rect x="2143" y="563" width="5" height="2.500" fill="#222"/><rect x="2134" y="572" width="14" height="2.500" fill="#222"/>
<path d="M2130 597H2152V602H2130Z" fill="#c8c8c8"/><path d="M2130 604H2152V611H2146V618H2136V611H2130Z" fill="#b8b8b8"/><path d="M2138 617L2141 609L2144 617Z" fill="#222"/>
<path d="M2136 638H2151V655H2136ZM2133 641V658H2148M2130 644V661H2145" fill="none" stroke="#c8c8c8" stroke-width="1.400"/><path d="M2138 652L2143 640L2149 652Z" fill="#c8c8c8"/>
<path d="M2137 678C2141 687 2142 690 2140 695C2137 698 2131 696 2131 691C2131 687 2134 684 2137 678Z" fill="#c8c8c8"/><circle cx="2146" cy="692" r="6" fill="#1d1d1d" stroke="#c8c8c8" stroke-width="1.400"/><circle cx="2148" cy="680" r="2.700" fill="#c8c8c8"/>
<circle cx="2141" cy="728" r="10.500" fill="none" stroke="#93434d" stroke-width="1.400"/><path d="M2134 722Q2141 717 2147 720L2146 727L2140 729L2142 736L2136 733Z" fill="#a34b55"/>
<path d="M2132 770H2150V775H2132ZM2133 777H2149V789H2133Z" fill="none" stroke="#ddd" stroke-width="1.500"/><rect x="2132" y="770" width="18" height="5" fill="#ddd"/><rect x="2139" y="780" width="4" height="2" fill="#ddd"/>
<path d="M2137 819H2132V824M2145 819H2150V824M2137 842H2132V837M2145 842H2150V837" fill="none" stroke="#d98a3d" stroke-width="1.500"/><rect x="2135" y="823" width="12" height="15" fill="#e39a55"/>
<circle cx="2141" cy="872" r="10" fill="none" stroke="#3d6fc0" stroke-width="1.800" stroke-dasharray="22 8"/><circle cx="2141" cy="872" r="5" fill="#5a90e0"/><circle cx="2149" cy="862" r="2.500" fill="#5a90e0"/>
<path d="M2132 917C2130 911 2142 903 2149 900C2151 906 2146 916 2137 920Z" fill="none" stroke="#4a7fd0" stroke-width="2"/><circle cx="2140" cy="912" r="3.500" fill="none" stroke="#4a7fd0" stroke-width="2"/>
<path d="M2141 941V954M2141 954L2150 953M2141 954L2134 962" fill="none" stroke="#1fb39b" stroke-width="1.500"/>
<rect x="2131" y="991" width="20" height="21" fill="#a0414d"/>
<path d="M2131 991h5v5h-5zM2141 991h5v5h-5zM2136 996h5v5h-5zM2146 996h5v5h-5zM2131 1001h5v5h-5zM2141 1001h5v5h-5zM2136 1006h5v5h-5zM2146 1006h5v5h-5z" fill="#1d1d1d"/>
<!-- context -->
<use href="#ob" x="2186" y="511"/><text x="2211" y="517" style="fill:#d0d0d0">Empty</text>
<path d="M2526 522L2532 514M2528 507L2538 502L2543 511L2534 516Z" fill="none" stroke="#8a8a8a" stroke-width="1.300"/>
<rect x="2172.500" y="550.500" width="375.500" height="28" rx="5" fill="#1d1d1d" stroke="#353535"/>
<path d="M2178 551H2217V578H2178Q2173 578 2173 573V556Q2173 551 2178 551Z" fill="#2a2a2a"/>
<use href="#ob" x="2190" y="564.500"/><use href="#dn" x="2208" y="566"/>
<text x="2229" y="570">Empty</text>
<!-- Transform -->
<rect class="p" x="2170" y="593" width="378" height="407" rx="6"/>
<use href="#pd" x="2188" y="611"/><text x="2201" y="618">Transform</text><use href="#gr" x="2522" y="609"/>
<text class="e" x="2305" y="661">Location X</text><text class="e" x="2305" y="690">Y</text><text class="e" x="2305" y="719">Z</text>
<path d="M2324 642H2473Q2477 642 2477 646V727H2324Q2320 727 2320 723V646Q2320 642 2324 642Z" class="f"/><path d="M2320 669.500H2477M2320 698.500H2477" stroke="#3a3a3a"/>
<text class="m" x="2398" y="661">0 m</text><text class="m" x="2398" y="690">0 m</text><text class="m" x="2398" y="719">0.4756 m</text>
<text class="e" x="2305" y="755">Rotation X</text><text class="e" x="2305" y="784">Y</text><text class="e" x="2305" y="813">Z</text>
<path d="M2324 736H2473Q2477 736 2477 740V822H2324Q2320 822 2320 818V740Q2320 736 2324 736Z" class="f"/><path d="M2320 763.500H2477M2320 792.500H2477" stroke="#3a3a3a"/>
<text class="m" x="2398" y="755">0°</text><text class="m" x="2398" y="784">0°</text><text class="m" x="2398" y="813">0°</text>
<text class="e" x="2305" y="849">Mode</text>
<rect x="2320" y="830" width="157" height="27" rx="4" fill="#282828"/><text x="2331" y="849">XYZ Euler</text><use href="#dn" x="2468" y="845"/>
<text class="e" x="2305" y="885">Scale X</text><text class="e" x="2305" y="914">Y</text><text class="e" x="2305" y="943">Z</text>
<path d="M2324 866H2473Q2477 866 2477 870V951H2324Q2320 951 2320 947V870Q2320 866 2324 866Z" class="f"/><path d="M2320 893.500H2477M2320 922.500H2477" stroke="#3a3a3a"/>
<text class="m" x="2398" y="885">0.246</text><text class="m" x="2398" y="914">0.246</text><text class="m" x="2398" y="943">0.246</text>
<use href="#lk" x="2490.500" y="655"/><use href="#lk" x="2490.500" y="684"/><use href="#lk" x="2490.500" y="713"/><use href="#lk" x="2490.500" y="750"/><use href="#lk" x="2490.500" y="778"/><use href="#lk" x="2490.500" y="807"/><use href="#lk" x="2490.500" y="880"/><use href="#lk" x="2490.500" y="908"/><use href="#lk" x="2490.500" y="937"/>
<g fill="#e0e0e0"><circle cx="2521" cy="655" r="3.300"/><circle cx="2521" cy="684" r="3.300"/><circle cx="2521" cy="713" r="3.300"/><circle cx="2521" cy="750" r="3.300"/><circle cx="2521" cy="778" r="3.300"/><circle cx="2521" cy="807" r="3.300"/><circle cx="2521" cy="843" r="3.300"/><circle cx="2521" cy="880" r="3.300"/><circle cx="2521" cy="908" r="3.300"/><circle cx="2521" cy="937" r="3.300"/></g>
<use href="#pr" x="2209" y="982"/><text x="2222" y="988.500" style="fill:#d8d8d8">Delta Transform</text>
<g class="p"><rect x="2170" y="1002" width="378" height="36" rx="6"/><rect x="2170" y="1040" width="378" height="36" rx="6"/><rect x="2170" y="1078" width="378" height="36" rx="6"/><rect x="2170" y="1116" width="378" height="36" rx="6"/><rect x="2170" y="1154" width="378" height="36" rx="6"/><rect x="2170" y="1192" width="378" height="36" rx="6"/><rect x="2170" y="1230" width="378" height="36" rx="6"/></g>
<use href="#pr" x="2190" y="1020"/><text x="2201" y="1027">Relations</text><use href="#gr" x="2522" y="1017"/>
<use href="#pr" x="2190" y="1058"/><text x="2201" y="1065">Collections</text><use href="#gr" x="2522" y="1055"/>
<use href="#pr" x="2190" y="1096"/><text x="2201" y="1103">Instancing</text><use href="#gr" x="2522" y="1093"/>
<use href="#pr" x="2190" y="1134"/><text x="2201" y="1141">Motion Paths</text><use href="#gr" x="2522" y="1131"/>
<use href="#pr" x="2190" y="1172"/><text x="2201" y="1179">Visibility</text><use href="#gr" x="2522" y="1169"/>
<use href="#pr" x="2190" y="1210"/><text x="2201" y="1217">Viewport Display</text><use href="#gr" x="2522" y="1207"/>
<use href="#pr" x="2190" y="1248"/><text x="2201" y="1255">Custom Properties</text><use href="#gr" x="2522" y="1245"/>

<!-- Status bar -->
<g fill="none" stroke="#a0a0a0" stroke-width="1.200"><rect x="17" y="1309" width="15" height="20" rx="5"/><rect x="368" y="1309" width="15" height="20" rx="5"/><rect x="719" y="1309" width="15" height="20" rx="5"/></g>
<path d="M18 1315V1312Q18 1310 24 1310V1317H18Z" fill="#b0b0b0"/><rect x="374" y="1312" width="3" height="8" fill="#b0b0b0"/><path d="M733 1315V1312Q733 1310 727 1310V1317H733Z" fill="#b0b0b0"/>
<text class="st" x="50.500" y="1324.500">Select</text>
<text class="st" x="400" y="1324.500">Rotate View</text>
<text class="st" x="751" y="1324.500">Object Context Menu</text>
<text class="e" x="2548" y="1325" style="fill:#7c7c7c;font-size:14.500px">3.4.1</text>
<text class="e" x="2545" y="1320" style="fill:#a8a8a8;font-size:17.300px">CSDN @passer__jw767</text>
</svg>
</body></html>
